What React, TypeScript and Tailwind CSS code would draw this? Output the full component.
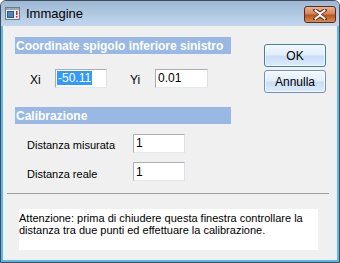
const font = { fontFamily: '"Liberation Sans", Arial, sans-serif' };

const WindowIcon = () => (
  <svg width="15" height="13" viewBox="0 0 15 13">
    <rect x="0.5" y="0.5" width="14" height="12" fill="#e8ecf0" stroke="#6c7a88" />
    <rect x="1" y="1" width="13" height="2" fill="#9aa8b6" />
    <rect x="2.5" y="4.5" width="6" height="6" fill="#4f86b8" stroke="#2c5a88" />
    <rect x="11" y="4" width="1.5" height="4" fill="#d02020" />
    <rect x="11" y="9" width="1.5" height="1.5" fill="#d02020" />
  </svg>
);

const CloseGlyph = () => (
  <svg width="14" height="11" viewBox="0 0 14 11">
    <path
      d="M2 1 L7 4.5 L12 1 M2 10 L7 6.5 L12 10"
      stroke="#5a2a22"
      strokeWidth="3.6"
      fill="none"
      strokeLinecap="square"
    />
    <path
      d="M2.5 1.5 L7 4.7 L11.5 1.5 M2.5 9.5 L7 6.3 L11.5 9.5 M7 4.7 L7 6.3"
      stroke="#ffffff"
      strokeWidth="2"
      fill="none"
      strokeLinecap="square"
    />
  </svg>
);

const SectionBar = ({ label }: { label: string }) => (
  <div className="flex h-[17px] w-[216px] items-center bg-[#99b9e4] pl-[1px] text-[12px] font-bold text-white">
    {label}
  </div>
);

const Field = ({
  value,
  width,
  selected = false,
}: {
  value: string;
  width: string;
  selected?: boolean;
}) => (
  <div
    className={`flex h-[19px] items-center border border-[#abadb3] border-b-[#e3e9ef] border-r-[#dbdfe6] bg-white pl-[1px] text-[12px] text-black ${width}`}
  >
    {selected ? (
      <span className="bg-[#3399ff] px-[1px] leading-[14px] text-white">{value}</span>
    ) : (
      <span className="px-[1px]">{value}</span>
    )}
  </div>
);

const Button = ({ label, primary = false }: { label: string; primary?: boolean }) => (
  <div
    className={`flex h-[23px] w-[62px] items-center justify-center rounded-[3px] border text-[12px] text-black ${
      primary ? "border-[#3c7fb1]" : "border-[#6f8fb7]"
    } bg-[linear-gradient(#f2f8fe_0%,#e1eefb_45%,#c9def5_55%,#dcebfb_100%)] shadow-[inset_0_0_0_1px_rgba(255,255,255,0.7)]`}
  >
    {label}
  </div>
);

export default function App() {
  return (
    <div className="h-[263px] w-[340px] overflow-hidden bg-white" style={font}>
      <div className="flex h-full w-full flex-col rounded-t-[6px] border border-[#3f4e5e] bg-[#b9d0ea]">
        <div className="flex h-[25px] shrink-0 items-center rounded-t-[5px] bg-[linear-gradient(#9db8d4,#b3cbe4_60%,#c3d7ee)] pl-[4px] pr-[3px]">
          <WindowIcon />
          <span className="ml-[6px] text-[13px] text-black">Immagine</span>
          <div className="ml-auto mt-[1px] flex h-[17px] w-[32px] items-center justify-center rounded-[3px] border border-[#5b2a22] bg-[linear-gradient(#e9b494,#d28458_45%,#b9541f_55%,#d98d52)]">
            <CloseGlyph />
          </div>
        </div>
        <div className="flex flex-1 border-x-2 border-b-2 border-[#5cb6ea] px-0">
          <div className="flex flex-1 flex-col bg-[#f0f0f0] text-[11px] text-black">
            <div className="flex">
              <div className="ml-[12px] mt-[11px] flex flex-col">
                <SectionBar label="Coordinate spigolo inferiore sinistro" />
                <div className="mt-[13px] flex items-center">
                  <span className="ml-[15px] w-[25px] pt-[4px] text-[12px]">Xi</span>
                  <Field value="-50.11" width="w-[52px]" selected />
                  <span className="ml-[23px] w-[25px] pt-[4px] text-[12px]">Yi</span>
                  <Field value="0.01" width="w-[53px]" />
                </div>
                <div className="mt-[18px]">
                  <SectionBar label="Calibrazione" />
                </div>
                <div className="mt-[9px] flex items-center">
                  <span className="ml-[12px] w-[106px] pt-[4px]">Distanza misurata</span>
                  <Field value="1" width="w-[52px]" />
                </div>
                <div className="mt-[8px] flex items-center">
                  <span className="ml-[12px] w-[106px] pt-[4px]">Distanza reale</span>
                  <Field value="1" width="w-[52px]" />
                </div>
              </div>
              <div className="ml-auto mr-[11px] mt-[18px] flex flex-col gap-[3px]">
                <Button label="OK" primary />
                <Button label="Annulla" />
              </div>
            </div>
            <div className="ml-[4px] mr-[8px] mt-[11px] h-[1px] bg-[#a0a0a0]" />
            <div className="ml-[16px] mr-[19px] mt-[15px] h-[41px] bg-white text-[11px] leading-[12px]">
              <p className="pt-[3px]">
                Attenzione: prima di chiudere questa finestra controllare la
                <br />
                distanza tra due punti ed effettuare la calibrazione.
              </p>
            </div>
          </div>
        </div>
      </div>
    </div>
  );
}
